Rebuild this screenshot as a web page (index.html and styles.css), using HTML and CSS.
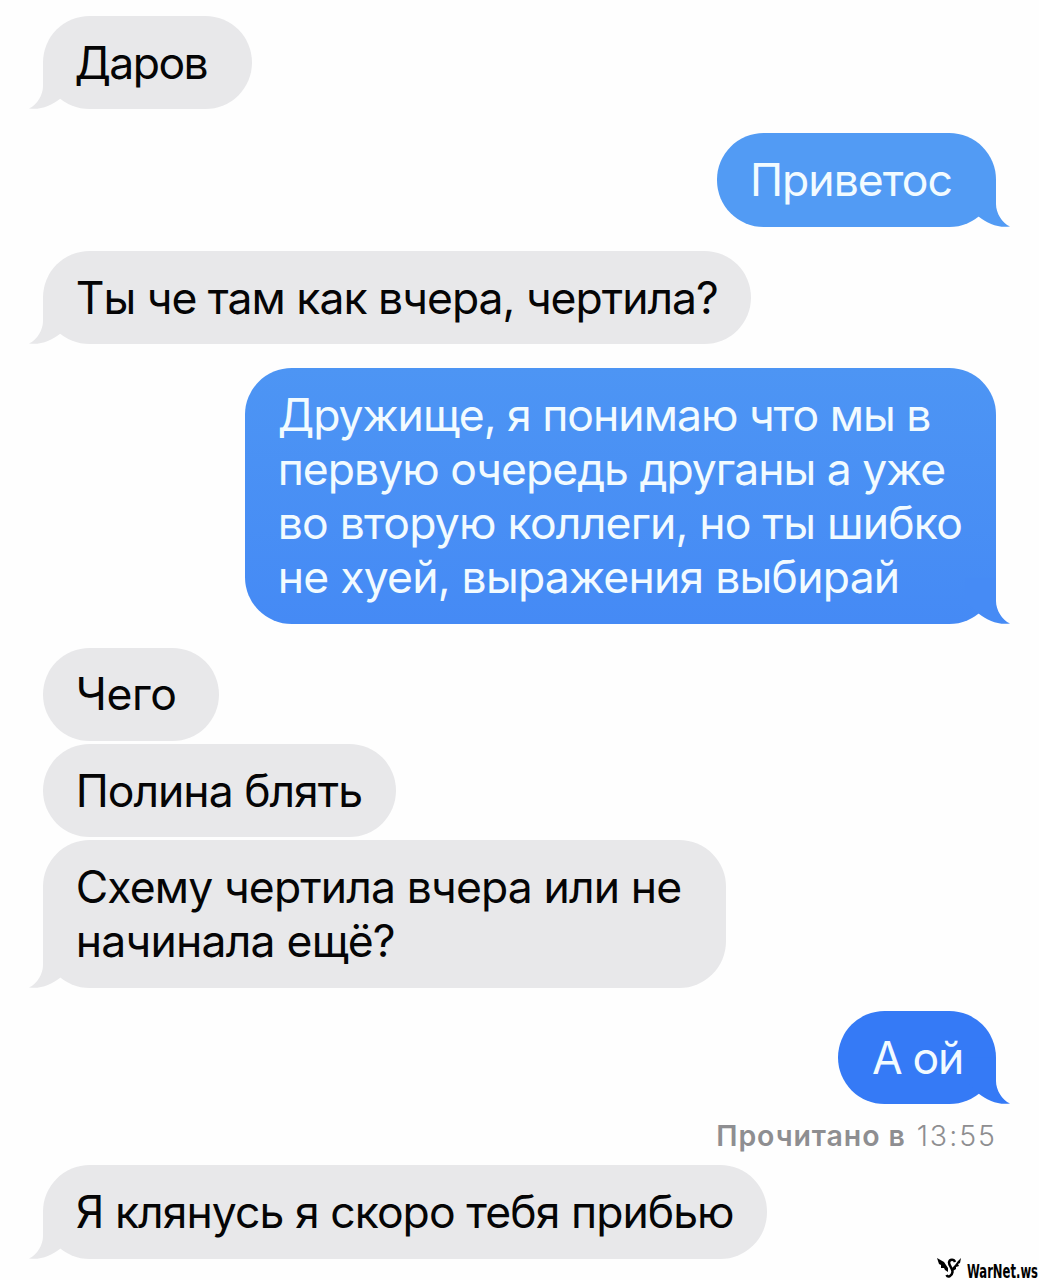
FILE: index.html
```html
<!DOCTYPE html>
<html lang="ru">
<head>
    <meta charset="UTF-8">
    <meta name="viewport" content="width=device-width, initial-scale=1.0">
    <title>Переписка</title>
    <link rel="stylesheet" href="styles.css">
</head>
<body>

    <!-- Tail shape shared by the bubbles -->
    <svg class="sprite" width="0" height="0">
        <symbol id="tail" viewBox="0 0 45 54">
            <path d="M14 7.500V31C14 40 8 50 0 53.500C12 55 22 51 31.500 43.500L45 30V7.500Z"/>
        </symbol>
    </svg>

    <main class="chat">
        <div class="msg in hi">Даров<svg class="tail"><use href="#tail"/></svg></div>

        <div class="msg out hello">Приветос<svg class="tail"><use href="#tail"/></svg></div>

        <div class="msg in question">Ты че там как вчера, чертила?<svg class="tail"><use href="#tail"/></svg></div>

        <div class="msg out long">Дружище, я понимаю что мы в<br>первую очередь друганы а уже<br><span class="loose">во вторую коллеги, но ты шибко<br>не хуей, выражения выбирай</span><svg class="tail"><use href="#tail"/></svg></div>

        <div class="group">
            <div class="msg in what">Чего</div>
            <div class="msg in name">Полина блять</div>
            <div class="msg in scheme">Схему чертила вчера или не<br><span class="loose">начинала ещё?</span><svg class="tail"><use href="#tail"/></svg></div>
        </div>

        <div class="msg out oops">А ой<svg class="tail"><use href="#tail"/></svg></div>
        <p class="status"><b>Прочитано в</b> <span class="time">13:55</span></p>

        <div class="msg in last">Я клянусь я скоро тебя прибью<svg class="tail"><use href="#tail"/></svg></div>
    </main>

    <!-- Site watermark -->
    <svg class="watermark" width="103" height="24" viewBox="0 0 103 24">
        <path d="M1 2L8 6L12 12L12 16L9 14L8 12L5 12L5 9L3 8Z"/>
        <path d="M25 2L22 5L19 9L16 12L17 15L20 13L20 11L23 10L22 8L24 7Z"/>
        <path class="body" d="M19 6C18 3 13.500 3 13 6.500C13 10 16.500 12 16.500 16C16 20 12 22 10.500 19"/>
        <text x="31" y="22" textLength="71" lengthAdjust="spacingAndGlyphs">WarNet.ws</text>
    </svg>

</body>
</html>
```
FILE: styles.css
```css
body {
    font-family: Inter, 'Liberation Sans', sans-serif;
    background: #fefefe;
    margin: 0;
    padding: 0;
}
.sprite {
    position: absolute;
}
.chat {
    display: flex;
    flex-direction: column;
    align-items: flex-start;
    gap: 24px;
    height: 1264px;
    padding: 16px 43px 0;
    overflow: hidden;
}
.group {
    display: flex;
    flex-direction: column;
    align-items: flex-start;
    gap: 3px;
    margin-bottom: -0.8px;
}
.msg {
    position: relative;
    box-sizing: border-box;
    padding: 19.8px 0 19.6px 32.7px;
    border-radius: 46.7px;
    font-size: 44.5px;
    line-height: 54px;
    letter-spacing: -1px;
    white-space: nowrap;
}
.in {
    background: #e8e8ea;
    color: #050506;
    fill: #e8e8ea;
}
.out {
    align-self: flex-end;
    color: #f2fbff;
}
.hi {
    width: 209px;
    padding-left: 31.5px;
    letter-spacing: -1.6px;
}
.hello {
    width: 279px;
    padding-left: 33px;
    background: #529bf4;
    fill: #529bf4;
}
.question {
    width: 708px;
}
.long {
    width: 751px;
    background: linear-gradient(#4d95f4, #458af5);
    fill: #458af5;
}
.long .tail {
    fill: #468bf5;
}
.what {
    width: 176px;
    letter-spacing: -0.4px;
}
.name {
    width: 353px;
}
.scheme {
    width: 682.5px;
    letter-spacing: -0.87px;
}
.oops {
    width: 158px;
    padding-left: 34px;
    letter-spacing: -1.3px;
    background: #357af6;
    fill: #357af6;
}
.last {
    width: 724px;
    letter-spacing: -0.95px;
}
.loose {
    letter-spacing: -0.77px;
}
.tail {
    position: absolute;
    left: -14px;
    bottom: 0;
    width: 45px;
    height: 54px;
}
.out .tail {
    left: auto;
    right: -14px;
    transform: scaleX(-1);
}
.status {
    align-self: flex-end;
    margin: -6px -1px -9px;
    font-size: 28.5px;
    line-height: 28px;
    color: #8e8e91;
    letter-spacing: 0.9px;
    white-space: nowrap;
}
.status b {
    font-weight: 600;
}
.status .time {
    margin-left: 2px;
    font-weight: 300;
    letter-spacing: 2px;
}
.watermark {
    position: absolute;
    left: 936px;
    top: 1256px;
    font-family: 'DejaVu Sans Condensed', 'DejaVu Sans', sans-serif;
    font-weight: bold;
    font-size: 20px;
}
.watermark .body {
    fill: none;
    stroke: #000;
    stroke-width: 2.5px;
}
```
